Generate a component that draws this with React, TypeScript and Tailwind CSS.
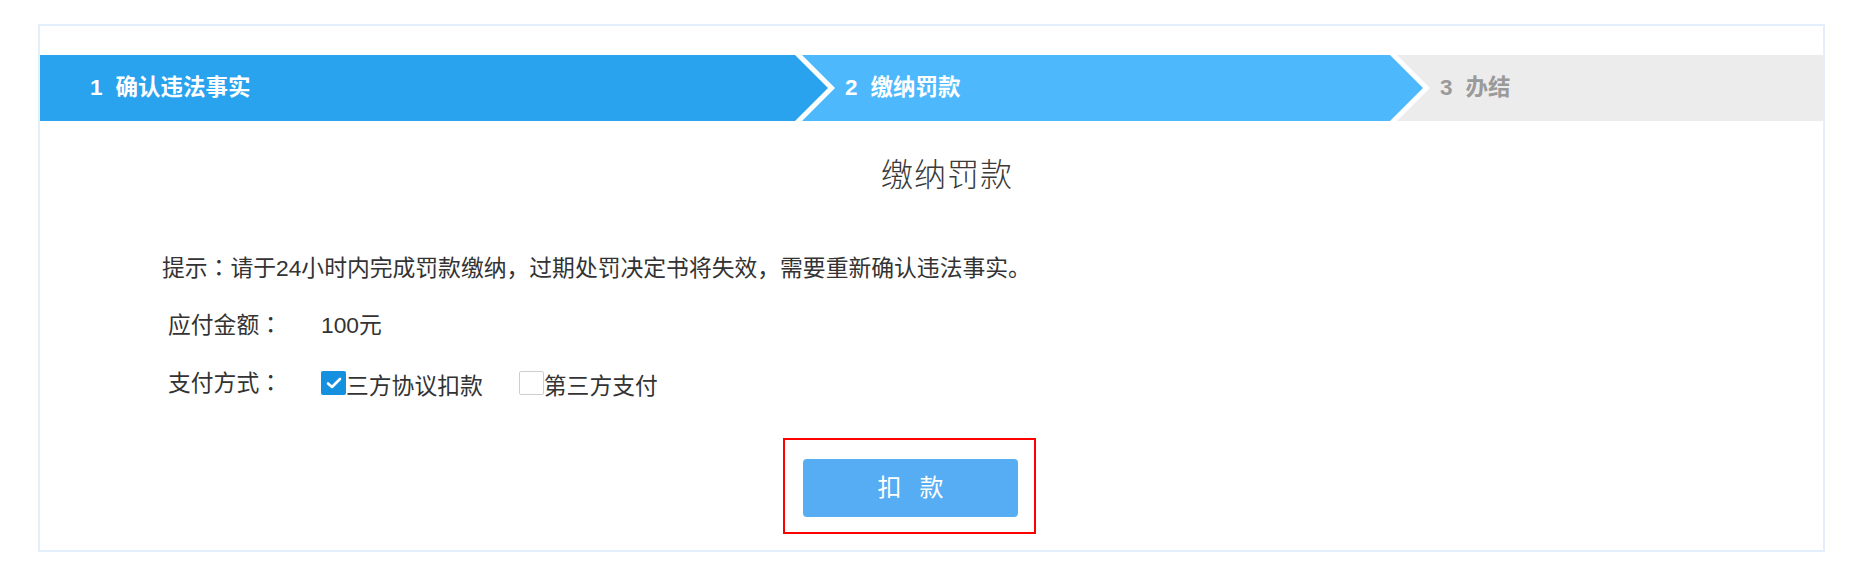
import { ReactNode } from "react";

type StepProps = {
    num: number;
    label: string;
    bg: string;
    text: string;
    width: string;
    arrow?: string;
};

const Chevron = ({ fill }: { fill: string }) => (
    <svg className="absolute left-full top-0 z-10" width="40" height="66" viewBox="0 0 40 66">
        <polygon points="0,0 7,0 40,33 7,66 0,66" fill="#ffffff" />
        <polygon points="0,0 33,33 0,66" fill={fill} />
    </svg>
);

const Step = ({ num, label, bg, text, width, arrow }: StepProps) => (
    <div className={`relative flex h-full items-center pl-[50px] text-[22.5px] font-bold ${bg} ${text} ${width}`}>
        <span>{num}</span>
        <span className="ml-[13px]">{label}</span>
        {arrow && <Chevron fill={arrow} />}
    </div>
);

// centred full-width colon, like the original font
const Colon = () => <span className="font-['Noto_Sans_CJK_JP',sans-serif]">：</span>;

const Row = ({ label, children }: { label: string; children: ReactNode }) => (
    <div className="flex h-[30px] items-center pl-[6px]">
        <span className="w-[153px]">
            {label}
            <Colon />
        </span>
        {children}
    </div>
);

const Checkbox = ({ checked }: { checked?: boolean }) =>
    checked ? (
        <span className="flex h-[24px] w-[25px] items-center justify-center rounded-[2px] bg-[#1590de]">
            <svg width="16" height="14" viewBox="0 0 16 14">
                <path d="M2 7.5 L6 11 L14 3" fill="none" stroke="#ffffff" strokeWidth="2.6" strokeLinecap="round" strokeLinejoin="round" />
            </svg>
        </span>
    ) : (
        <span className="h-[24px] w-[25px] rounded-[2px] border border-[#cfcfcf] bg-white" />
    );

export default function App() {
    return (
        <div className="min-h-screen bg-white pl-[38px] pt-[24px] font-['Liberation_Sans','Noto_Sans_CJK_SC',sans-serif] text-[#333]">
            <div className="h-[528px] w-[1787px] border-2 border-[#e3effb] pt-[29px]">
                <div className="flex h-[66px]">
                    <Step num={1} label="确认违法事实" bg="bg-[#2aa3ee]" text="text-white" width="w-[755px]" arrow="#2aa3ee" />
                    <Step num={2} label="缴纳罚款" bg="bg-[#4db8fb]" text="text-white" width="w-[595px]" arrow="#4db8fb" />
                    <Step num={3} label="办结" bg="bg-[#ececec]" text="text-[#9a9a9a]" width="flex-1" />
                </div>

                <div className="mt-[34px] pl-[31px] text-center text-[32px] font-light leading-[40px] tracking-[1px] text-[#3a3a3a]">
                    缴纳罚款
                </div>

                <div className="pl-[122px] text-[22.8px]">
                    <div className="mt-[57px] h-[30px] leading-[30px]">
                        提示<Colon />请于24小时内完成罚款缴纳，过期处罚决定书将失效，需要重新确认违法事实。
                    </div>
                    <div className="mt-[28px]">
                        <Row label="应付金额">
                            <span>100元</span>
                        </Row>
                    </div>
                    <div className="mt-[28px]">
                        <Row label="支付方式">
                            <label className="flex items-center">
                                <Checkbox checked />
                                <span className="mt-[6px]">三方协议扣款</span>
                            </label>
                            <label className="ml-[36px] flex items-center">
                                <Checkbox />
                                <span className="mt-[6px]">第三方支付</span>
                            </label>
                        </Row>
                    </div>
                </div>

                <div className="mt-[40px] flex justify-center pr-[44px]">
                    <div className="h-[96px] w-[253px] border-2 border-[#ff0000] pl-[18px] pt-[19px]">
                        <button className="flex h-[58px] w-[215px] items-center justify-center gap-[18px] rounded-[4px] bg-[#56adf3] text-[24px] text-white">
                            <span>扣</span>
                            <span>款</span>
                        </button>
                    </div>
                </div>
            </div>
        </div>
    );
}
